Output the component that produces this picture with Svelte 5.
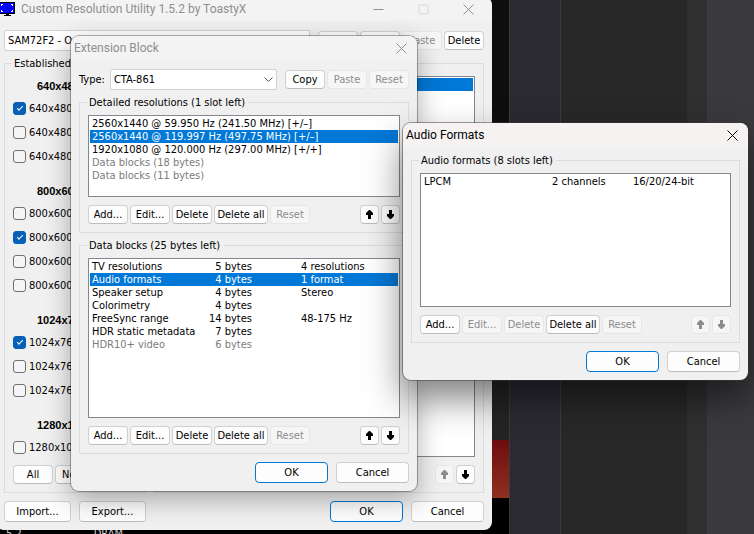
<script lang="ts">
	type Block = { name: string; size: string; details: string; muted?: boolean };

	const established = [
		{ title: '640x480', modes: [['640x480', true], ['640x480', false], ['640x480', false]] },
		{ title: '800x600', modes: [['800x600', false], ['800x600', true], ['800x600', false], ['800x600', false]] },
		{ title: '1024x768', modes: [['1024x768', true], ['1024x768', false], ['1024x768', false]] },
		{ title: '1280x1024', modes: [['1280x1024', false]] }
	] as { title: string; modes: [string, boolean][] }[];

	const resolutions = [
		{ text: '2560x1440 @ 59.950 Hz (241.50 MHz) [+/–]' },
		{ text: '2560x1440 @ 119.997 Hz (497.75 MHz) [+/–]' },
		{ text: '1920x1080 @ 120.000 Hz (297.00 MHz) [+/+]' },
		{ text: 'Data blocks (18 bytes)', muted: true },
		{ text: 'Data blocks (11 bytes)', muted: true }
	];

	const blocks: Block[] = [
		{ name: 'TV resolutions', size: '5 bytes', details: '4 resolutions' },
		{ name: 'Audio formats', size: '4 bytes', details: '1 format' },
		{ name: 'Speaker setup', size: '4 bytes', details: 'Stereo' },
		{ name: 'Colorimetry', size: '4 bytes', details: '' },
		{ name: 'FreeSync range', size: '14 bytes', details: '48-175 Hz' },
		{ name: 'HDR static metadata', size: '7 bytes', details: '' },
		{ name: 'HDR10+ video', size: '6 bytes', details: '', muted: true }
	];

	let selectedResolution = 1;
	let selectedBlock = 1;
</script>

{#snippet closeIcon()}
	<svg width="11" height="11" viewBox="0 0 11 11" fill="none" stroke="currentColor">
		<path d="M.5 .5l10 10M10.5 .5l-10 10" />
	</svg>
{/snippet}

{#snippet arrows(upDisabled: boolean, downDisabled: boolean)}
	<div class="arrows">
		<button class="arrow" aria-label="Move up" disabled={upDisabled}>
			<svg width="9" height="9" viewBox="0 0 9 9" fill="currentColor">
				<path d="M4 0h1l3 3v2H6v4H3V5H1V3z" />
			</svg>
		</button>
		<button class="arrow" aria-label="Move down" disabled={downDisabled}>
			<svg width="9" height="9" viewBox="0 0 9 9" fill="currentColor">
				<path d="M3 0h3v4h2v2L5 9H4L1 6V4h2z" />
			</svg>
		</button>
	</div>
{/snippet}

{#snippet actions(locked: boolean)}
	<div class="row">
		<button>Add...</button>
		<button disabled={locked}>Edit...</button>
		<button disabled={locked}>Delete</button>
		<button class="wide">Delete all</button>
		<button disabled>Reset</button>
		{@render arrows(locked, locked)}
	</div>
{/snippet}

<div class="desktop">
	<div class="backdrop">
		<div class="terminal">
			<div class="strip"></div>
			<div class="red"></div>
			<div class="console"><span>5.2</span><span>DRAM</span></div>
		</div>
		<div class="panel violet"></div>
		<div class="panel"></div>
		<div class="panel grey"></div>
		<div class="panel light"></div>
	</div>

	<section class="window main">
		<header class="inactive">
			<svg class="logo" width="16" height="16" viewBox="0 0 16 16" shape-rendering="crispEdges">
				<path d="M0 1h15v12H0z" fill="#000" />
				<path d="M0 2h14v10H0z" fill="#00f" />
				<path d="M6 13h3v1h2v1H4v-1h2z" fill="#000" />
				<path d="M1 5V3h2v1H2v1zM11 3h2v2h-1V4h-1zM12 9h1v2h-2v-1h1zM1 9h1v1h1v1H1z" fill="#fff" />
			</svg>
			<h1>Custom Resolution Utility 1.5.2 by ToastyX</h1>
			<div class="caption">
				<button aria-label="Minimize"><svg width="11" height="11" viewBox="0 0 11 11" stroke="currentColor"><path d="M.5 5.5h10" /></svg></button>
				<button class="faint" aria-label="Maximize"><svg width="11" height="11" viewBox="0 0 11 11" fill="none" stroke="currentColor"><rect x="1" y="1" width="9" height="9" rx="1" /></svg></button>
				<button aria-label="Close">{@render closeIcon()}</button>
			</div>
		</header>
		<div class="row top">
			<select class="display" aria-label="Display"><option>SAM72F2 - Odyssey</option></select>
			<button>Edit...</button>
			<button>Copy</button>
			<button disabled>Paste</button>
			<button>Delete</button>
		</div>
		<div class="groups">
			<fieldset class="established">
				<legend>Established</legend>
				{#each established as group}
					<h2>{group.title}</h2>
					{#each group.modes as [mode, checked]}
						<label class="mode"><input type="checkbox" {checked} />{mode}</label>
					{/each}
				{/each}
				<div class="row">
					<button>All</button>
					<button>None</button>
				</div>
			</fieldset>
			<fieldset class="detailed">
				<legend>Detailed resolutions</legend>
				<ul class="list">
					<li class="selected">2560x1440</li>
				</ul>
				<div class="row">
					{@render arrows(true, false)}
				</div>
			</fieldset>
		</div>
		<footer>
			<button class="file">Import...</button>
			<button class="file">Export...</button>
			<div class="confirm">
				<button class="default">OK</button>
				<button>Cancel</button>
			</div>
		</footer>
	</section>

	<section class="window extension">
		<header class="inactive">
			<h1>Extension Block</h1>
			<div class="caption">
				<button aria-label="Close">{@render closeIcon()}</button>
			</div>
		</header>
		<div class="row top">
			<label for="block-type">Type:</label>
			<div class="combo">
				<select id="block-type"><option>CTA-861</option></select>
				<svg width="9" height="5" viewBox="0 0 9 5" fill="none" stroke="#555"><path d="M.5 .5l4 4 4-4" /></svg>
			</div>
			<button>Copy</button>
			<button disabled>Paste</button>
			<button disabled>Reset</button>
		</div>
		<fieldset>
			<legend>Detailed resolutions (1 slot left)</legend>
			<ul class="list short">
				{#each resolutions as { text, muted }, i}
					<li class:selected={i === selectedResolution} class:muted>{text}</li>
				{/each}
			</ul>
			{@render actions(false)}
		</fieldset>
		<fieldset>
			<legend>Data blocks (25 bytes left)</legend>
			<div class="list tall">
				<table>
					<tbody>
						{#each blocks as { name, size, details, muted }, i}
							<tr class:selected={i === selectedBlock} class:muted>
								<td class="name">{name}</td>
								<td class="size">{size}</td>
								<td>{details}</td>
							</tr>
						{/each}
					</tbody>
				</table>
			</div>
			{@render actions(false)}
		</fieldset>
		<footer>
			<div class="confirm">
				<button class="default">OK</button>
				<button>Cancel</button>
			</div>
		</footer>
	</section>

	<section class="window audio">
		<header>
			<h1>Audio Formats</h1>
			<div class="caption">
				<button aria-label="Close">{@render closeIcon()}</button>
			</div>
		</header>
		<fieldset>
			<legend>Audio formats (8 slots left)</legend>
			<div class="list medium">
				<table>
					<tbody>
						<tr>
							<td class="format">LPCM</td>
							<td class="channels">2 channels</td>
							<td>16/20/24-bit</td>
						</tr>
					</tbody>
				</table>
			</div>
			{@render actions(true)}
		</fieldset>
		<footer>
			<div class="confirm">
				<button class="default">OK</button>
				<button>Cancel</button>
			</div>
		</footer>
	</section>
</div>

<style>
	:global(body) {
		margin: 0;
	}

	.desktop {
		position: relative;
		min-height: 100vh;
		overflow: hidden;
		background: #0e0e0e;
		color: #000;
		font: 11px/13px 'DejaVu Sans Condensed', Tahoma, 'Noto Sans', sans-serif;
	}

	.backdrop {
		position: absolute;
		inset: 0;
		display: grid;
		grid-template-columns: 1fr 52px 126px 20px 47px;
	}

	.terminal {
		display: flex;
		flex-direction: column;
		justify-content: flex-end;
		overflow: hidden;
	}

	.strip {
		height: 60px;
		background: #242424;
	}

	.red {
		height: 58px;
		background: linear-gradient(#6e0d10, #8f3020);
	}

	.console {
		display: flex;
		gap: 72px;
		height: 36px;
		padding-left: 6px;
		align-items: flex-end;
		background: #000;
		color: #ccc;
	}

	.console span {
		margin-bottom: -6px;
	}

	.panel {
		background: #282828;
	}

	.violet {
		background: #2b2a33;
		border: solid #3b3b3e;
		border-width: 0 1px;
	}

	.grey {
		background: #303031;
	}

	.light {
		background: #3a393d;
	}

	.window {
		position: absolute;
		box-sizing: border-box;
		padding: 0 8px 8px;
		border-radius: 8px;
		background: #f0f0f0;
	}

	.main {
		top: -3px;
		left: -4px;
		right: 262px;
	}

	.extension {
		top: 36px;
		left: 71px;
		right: 337px;
		box-shadow: 0 0 0 1px rgba(0, 0, 0, 0.3), 0 8px 26px rgba(0, 0, 0, 0.32);
	}

	.audio {
		top: 123px;
		left: 403px;
		right: 6px;
		box-shadow: 0 0 0 1px rgba(60, 60, 60, 0.5), 0 18px 36px rgba(0, 0, 0, 0.5);
	}

	header {
		display: flex;
		align-items: center;
		height: 24px;
		margin: 0 -8px;
		padding: 0 10px 0 3px;
		border-radius: 8px 8px 0 0;
		background: #f5f2f1;
	}

	.inactive {
		background: #f3f3f3;
		color: #8f8f8f;
	}

	h1 {
		margin: 0;
		font: 12px/16px Roboto, 'Segoe UI', sans-serif;
	}

	.logo {
		margin: 0 5px 0 1px;
	}

	.caption {
		display: flex;
		gap: 34px;
		margin-left: auto;
	}

	.caption button {
		width: 11px;
		height: 11px;
		padding: 0;
		border: none;
		background: none;
		color: inherit;
		line-height: 0;
	}

	.caption .faint {
		color: #d8d8d8;
	}

	.main .caption {
		padding-right: 8px;
	}

	.row {
		display: flex;
		align-items: center;
		gap: 2px;
	}

	.top {
		margin-top: 9px;
	}

	button {
		flex: none;
		box-sizing: border-box;
		width: 40px;
		height: 19px;
		padding: 0;
		border: 1px solid #d0d0d0;
		border-bottom-color: #bdbdbd;
		border-radius: 4px;
		background: #fdfdfd;
		color: #000;
		font: inherit;
		white-space: nowrap;
	}

	button:disabled {
		border-color: #e6e6e6;
		background: #f6f6f6;
		color: #8c8c8c;
	}

	.wide {
		width: 54px;
	}

	.arrows {
		display: flex;
		gap: 2px;
		margin-left: auto;
	}

	.arrow {
		display: grid;
		place-items: center;
		width: 19px;
	}

	select {
		appearance: none;
		box-sizing: border-box;
		width: 100%;
		height: 21px;
		padding: 0 3px;
		border: 1px solid #d0d0d0;
		border-radius: 2px;
		background: #fff;
		color: #000;
		font: inherit;
	}

	.display {
		flex: 1;
		margin-right: 6px;
	}

	.combo {
		position: relative;
		flex: 1;
		margin: 0 6px 0 3px;
	}

	.combo svg {
		position: absolute;
		top: 8px;
		right: 4px;
		pointer-events: none;
	}

	fieldset {
		min-width: 0;
		margin: 6px 0 0;
		padding: 6px 8px 8px;
		border: 1px solid #dcdcdc;
	}

	header + fieldset {
		margin-top: 7px;
	}

	legend {
		padding: 0 3px 0 2px;
		margin-left: -1px;
	}

	.groups {
		display: flex;
		gap: 8px;
	}

	.established {
		flex: none;
		box-sizing: border-box;
		width: 142px;
	}

	.detailed {
		flex: 1;
		display: flex;
		flex-direction: column;
	}

	.detailed .list {
		flex: 1;
	}

	h2 {
		margin: 13px 0 0 24px;
		font: bold 11px/20px 'Liberation Sans', Arial, sans-serif;
	}

	legend + h2 {
		margin-top: 0;
	}

	.mode {
		display: flex;
		align-items: center;
		gap: 3px;
		height: 24px;
		white-space: nowrap;
	}

	.mode + .row {
		margin-top: 6px;
	}

	input {
		appearance: none;
		box-sizing: border-box;
		display: grid;
		place-items: center;
		flex: none;
		width: 13px;
		height: 13px;
		margin: 0;
		border: 1px solid #707070;
		border-radius: 3px;
		background: #f5f5f5;
	}

	input:checked {
		border-color: #0560b6;
		background: #0560b6;
	}

	input:checked::after {
		content: '';
		width: 5px;
		height: 2px;
		margin-bottom: 2px;
		border: solid #fff;
		border-width: 0 0 1px 1px;
		transform: rotate(-45deg);
	}

	.list {
		box-sizing: border-box;
		margin: 0 0 8px;
		padding: 1px;
		border: 1px solid #828790;
		background: #fff;
		list-style: none;
	}

	.short {
		min-height: 82px;
	}

	.medium {
		min-height: 134px;
	}

	.tall {
		min-height: 160px;
	}

	li {
		padding-left: 2px;
		white-space: nowrap;
		overflow: hidden;
	}

	.muted {
		color: #7c7c7c;
	}

	.selected {
		background: #0078d7;
		color: #fff;
	}

	table {
		width: 100%;
		border-collapse: collapse;
		table-layout: fixed;
	}

	td {
		height: 13px;
		padding: 0;
		white-space: nowrap;
	}

	.name {
		width: 109px;
		padding-left: 2px;
	}

	.size {
		width: 51px;
		padding-right: 49px;
		text-align: right;
	}

	.format {
		width: 128px;
		padding-left: 2px;
	}

	.channels {
		width: 81px;
	}

	footer {
		display: flex;
		gap: 8px;
		margin-top: 8px;
	}

	footer button {
		width: 73px;
		height: 21px;
	}

	footer .file {
		width: 67px;
	}

	.confirm {
		display: flex;
		gap: 8px;
		margin-left: auto;
	}

	.default {
		border-color: #0078d4;
	}
</style>
